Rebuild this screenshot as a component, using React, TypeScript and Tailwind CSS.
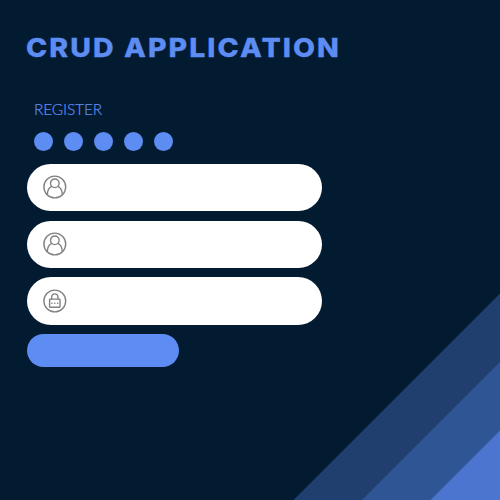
import type { ReactNode } from "react";

function IconFrame({ children }: { children: ReactNode }) {
  return (
    <svg
      className="h-6 w-6"
      viewBox="0 0 24 24"
      fill="none"
      stroke="#828282"
      strokeWidth="1.4"
      strokeLinecap="round"
      strokeLinejoin="round"
      aria-hidden="true"
    >
      <circle cx="11.8" cy="12" r="10.9" />
      {children}
    </svg>
  );
}

function UserIcon() {
  return (
    <IconFrame>
      <circle cx="11.8" cy="8.3" r="4.3" />
      <path d="M8.8 11.4C5.8 12.6 4.4 15.6 4.4 19.6M14.8 11.4C17.8 12.6 19.2 15.6 19.2 19.6" />
    </IconFrame>
  );
}

function LockIcon() {
  return (
    <IconFrame>
      <rect x="6.6" y="10.1" width="10.4" height="8.1" rx="0.4" />
      <path d="M8.7 10V8C8.7 6.1 9.9 4.9 11.8 4.9S14.9 6.1 14.9 8V10" />
      <path d="M8.8 14.2H9M11.7 14.2H11.9M14.6 14.2H14.8" />
    </IconFrame>
  );
}

function Field({ children }: { children: ReactNode }) {
  return (
    <div className="flex h-[47.6px] w-[295.3px] items-center rounded-full bg-white pl-4">
      {children}
    </div>
  );
}

function Stripes() {
  return (
    <svg className="absolute right-0 bottom-0 h-[207px] w-[207px]" viewBox="0 0 207 207" aria-hidden="true">
      <path d="M0.5 207L207 0.5V207Z" fill="#203f6e" />
      <path d="M69 207L207 69V207Z" fill="#305594" />
      <path d="M137.5 207L207 137.5V207Z" fill="#4b75cf" />
    </svg>
  );
}

export default function App() {
  return (
    <main className="relative flex h-[500px] w-[500px] flex-col overflow-hidden bg-[#031b30] pl-[27px]">
      <Stripes />
      <h1 className="mt-[30px] -ml-[0.7px] h-9 w-max origin-left scale-x-[1.095] font-['Inter',sans-serif] text-[26px] leading-9 font-extrabold tracking-[1.9px] whitespace-nowrap text-[#5d8cf3] [-webkit-text-stroke:0.3px_#5d8cf3]">
        CRUD APPLICATION
      </h1>
      <h2 className="mt-[33px] ml-[7px] h-5 font-['Lato',sans-serif] text-[15.5px] leading-5 font-light tracking-[-0.15px] whitespace-nowrap text-[#5d8cf3] [-webkit-text-stroke:0.2px_#5d8cf3]">
        REGISTER
      </h2>
      <div className="mt-[13.3px] ml-[7px] flex gap-[11px]">
        <span className="h-[19px] w-[19px] rounded-full bg-[#5d8cf3]" />
        <span className="h-[19px] w-[19px] rounded-full bg-[#5d8cf3]" />
        <span className="h-[19px] w-[19px] rounded-full bg-[#5d8cf3]" />
        <span className="h-[19px] w-[19px] rounded-full bg-[#5d8cf3]" />
        <span className="h-[19px] w-[19px] rounded-full bg-[#5d8cf3]" />
      </div>
      <form className="mt-[12.4px] flex flex-col items-start gap-[9.3px]">
        <Field><UserIcon /></Field>
        <Field><UserIcon /></Field>
        <Field><LockIcon /></Field>
        <button type="button" aria-label="Register" className="h-[33px] w-[152.4px] rounded-full bg-[#5d8cf3]" />
      </form>
    </main>
  );
}
